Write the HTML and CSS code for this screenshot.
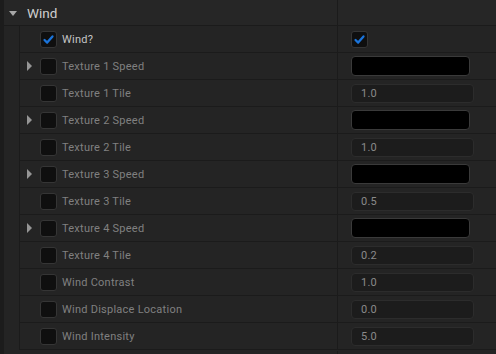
FILE: index.html
```html
<!DOCTYPE html>
<html lang="en">
<head>
    <meta charset="UTF-8">
    <title>Wind</title>
    <link rel="stylesheet" href="styles.css">
</head>
<body>
    <div class="panel">
        <div class="header">
            <div class="header-name"><span class="caret-down"></span>Wind</div>
            <div class="header-value"></div>
        </div>
        <div class="rows">
            <div class="row">
                <div class="name"><span class="expander"></span><span class="check on"><svg viewBox="0 0 17 17"><path d="M4 9 L7 12 L13 5" /></svg></span><span class="label bright">Wind?</span></div>
                <div class="value"><span class="check on"><svg viewBox="0 0 17 17"><path d="M4 9 L7 12 L13 5" /></svg></span></div>
            </div>
            <div class="row">
                <div class="name"><span class="expander arrow"></span><span class="check"></span><span class="label">Texture 1 Speed</span></div>
                <div class="value"><span class="swatch"></span></div>
            </div>
            <div class="row">
                <div class="name"><span class="expander"></span><span class="check"></span><span class="label">Texture 1 Tile</span></div>
                <div class="value"><span class="num">1.0</span></div>
            </div>
            <div class="row">
                <div class="name"><span class="expander arrow"></span><span class="check"></span><span class="label">Texture 2 Speed</span></div>
                <div class="value"><span class="swatch"></span></div>
            </div>
            <div class="row">
                <div class="name"><span class="expander"></span><span class="check"></span><span class="label">Texture 2 Tile</span></div>
                <div class="value"><span class="num">1.0</span></div>
            </div>
            <div class="row">
                <div class="name"><span class="expander arrow"></span><span class="check"></span><span class="label">Texture 3 Speed</span></div>
                <div class="value"><span class="swatch"></span></div>
            </div>
            <div class="row">
                <div class="name"><span class="expander"></span><span class="check"></span><span class="label">Texture 3 Tile</span></div>
                <div class="value"><span class="num">0.5</span></div>
            </div>
            <div class="row">
                <div class="name"><span class="expander arrow"></span><span class="check"></span><span class="label">Texture 4 Speed</span></div>
                <div class="value"><span class="swatch"></span></div>
            </div>
            <div class="row">
                <div class="name"><span class="expander"></span><span class="check"></span><span class="label">Texture 4 Tile</span></div>
                <div class="value"><span class="num">0.2</span></div>
            </div>
            <div class="row">
                <div class="name"><span class="expander"></span><span class="check"></span><span class="label">Wind Contrast</span></div>
                <div class="value"><span class="num">1.0</span></div>
            </div>
            <div class="row">
                <div class="name"><span class="expander"></span><span class="check"></span><span class="label">Wind Displace Location</span></div>
                <div class="value"><span class="num">0.0</span></div>
            </div>
            <div class="row">
                <div class="name"><span class="expander"></span><span class="check"></span><span class="label">Wind Intensity</span></div>
                <div class="value"><span class="num">5.0</span></div>
            </div>
        </div>
        <div class="footer">
            <div class="footer-name"></div>
            <div class="footer-value"></div>
        </div>
    </div>
</body>
</html>
```

FILE: styles.css
```css
body {
    margin: 0;
    background-color: #242424;
    font-family: Roboto, "Noto Sans", sans-serif;
    height: 354px;
    overflow: hidden;
}
.panel {
    border-left: 4px solid #1c1c1c;
    min-height: 354px;
    box-sizing: border-box;
}
.header {
    display: grid;
    grid-template-columns: 334px 1fr;
    height: 25px;
    border-bottom: 1px solid #1b1b1b;
    background-color: #262626;
}
.header-name {
    display: flex;
    align-items: center;
    color: #cfcfcf;
    font-size: 13.5px;
    border-right: 1px solid #1b1b1b;
}
.caret-down {
    width: 0;
    height: 0;
    border-left: 4px solid transparent;
    border-right: 4px solid transparent;
    border-top: 5px solid #a8a8a8;
    margin: 1px 10px 0 5px;
}
.rows {
    margin-left: 15px;
    border-left: 1px solid #1b1b1b;
}
.row {
    display: grid;
    grid-template-columns: 318px 1fr;
    height: 26px;
    border-bottom: 1px solid #1b1b1b;
}
.name {
    display: flex;
    align-items: center;
    border-right: 1px solid #1b1b1b;
}
.expander {
    width: 20px;
    height: 26px;
    display: flex;
    align-items: center;
}
.expander.arrow::before {
    content: "";
    border-top: 5px solid transparent;
    border-bottom: 5px solid transparent;
    border-left: 5px solid #959595;
    margin-left: 7px;
}
.check {
    box-sizing: border-box;
    width: 17px;
    height: 17px;
    border: 1px solid #353535;
    border-radius: 3px;
    background-color: #0f0f0f;
    display: inline-flex;
}
.check svg {
    width: 15px;
    height: 15px;
}
.check path {
    fill: none;
    stroke: #1a74db;
    stroke-width: 2.6;
    stroke-linecap: round;
    stroke-linejoin: round;
}
.label {
    margin-left: 5px;
    font-size: 11px;
    letter-spacing: 0.25px;
    color: #808080;
}
.label.bright {
    color: #c4c4c4;
}
.value {
    display: flex;
    align-items: center;
    padding-left: 13px;
}
.swatch {
    box-sizing: border-box;
    width: 119px;
    height: 20px;
    background-color: #000;
    border: 1px solid #3a3a3a;
    border-radius: 4px;
}
.num {
    box-sizing: border-box;
    width: 123px;
    height: 19px;
    background-color: #1c1c1c;
    border: 1px solid #2c2c2c;
    border-radius: 4px;
    padding-left: 9px;
    line-height: 17px;
    font-size: 11px;
    letter-spacing: 0.25px;
    color: #8a8a8a;
}
.footer {
    display: grid;
    grid-template-columns: 334px 1fr;
    height: 4px;
    margin-top: 1px;
}
.footer-name {
    border-right: 1px solid #1b1b1b;
}
```
